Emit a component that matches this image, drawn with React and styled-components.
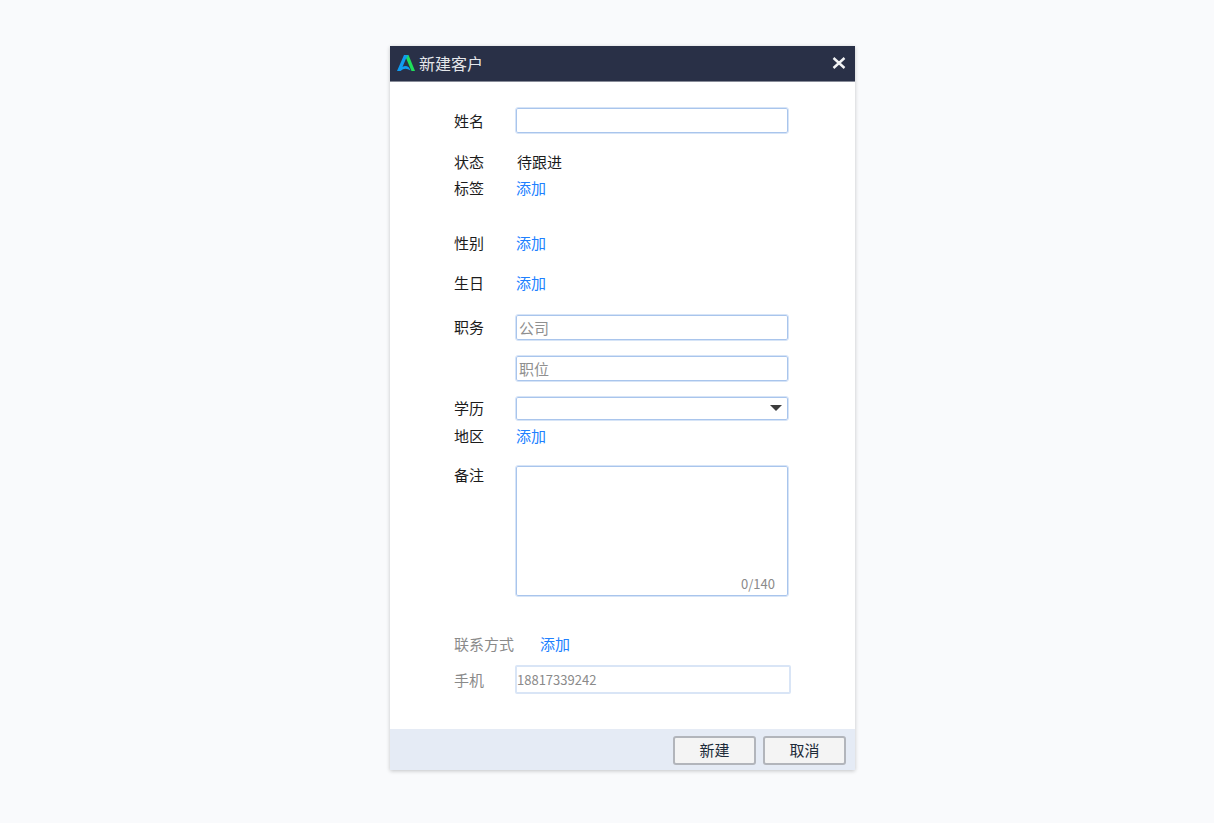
import React, { useState } from 'react';
import styled, { createGlobalStyle, css } from 'styled-components';

const GlobalStyle = createGlobalStyle`
  * {
    box-sizing: border-box;
  }

  body {
    margin: 0;
    background-color: #f9fafc;
    color: #1c1c1c;
    font-family: 'Noto Sans CJK SC', sans-serif;
    font-size: 15px;
    line-height: 26px;
  }

  button,
  input,
  select,
  textarea {
    font-family: inherit;
  }
`;

const fieldBorder = css`
  border: 1px solid #d6e4f7;
  border-radius: 3px;
  box-shadow: inset 0 0 0 1px #a9c5ec;
  outline: none;
`;

const Page = styled.main`
  display: flex;
  justify-content: center;
  align-items: flex-start;
  padding: 46px 0 48px 31px;
`;

const Dialog = styled.form`
  width: 100%;
  max-width: 465px;
  background-color: #fff;
  box-shadow: 0 1px 4px rgba(0, 0, 0, 0.22);
`;

const TitleBar = styled.header`
  display: flex;
  align-items: center;
  gap: 4px;
  height: 36px;
  padding: 0 8px 2px 7px;
  background-color: #293047;
  border-bottom: 1px solid #878b98;
`;

const Title = styled.h1`
  flex: 1;
  margin: 0;
  color: #e4e6ea;
  font-size: 16px;
  font-weight: 400;
`;

const CloseButton = styled.button`
  display: flex;
  padding: 0;
  border: none;
  background: none;
  cursor: pointer;
`;

const Body = styled.div`
  padding: 25px 64px 35px;
`;

const Row = styled.div`
  display: grid;
  grid-template-columns: ${(props) => (props.$wide ? '85px' : '61px')} 1fr;
  align-items: ${(props) => (props.$top ? 'start' : 'center')};
  min-height: 26px;
  margin-top: ${(props) => props.$gap || 0}px;
`;

const Label = styled.label`
  color: ${(props) => (props.$muted ? '#8a8a8a' : 'inherit')};
  line-height: ${(props) => (props.$tight ? '20px' : 'inherit')};
`;

const Value = styled.output`
  padding-left: 2px;
`;

const AddLink = styled.a`
  justify-self: start;
  padding-left: 1px;
  color: #2080ff;
  text-decoration: none;
`;

const Input = styled.input`
  width: 100%;
  max-width: 274px;
  height: 27px;
  padding: 0 3px;
  background-color: #fff;
  color: #1c1c1c;
  font-size: 15px;
  ${fieldBorder}

  &::placeholder {
    color: #8f8f8f;
  }
`;

const PhoneInput = styled(Input)`
  max-width: 276px;
  height: 29px;
  padding: 0;
  border: 2px solid #d9e5f6;
  border-radius: 2px;
  box-shadow: none;
  color: #8a8a8a;
  font-size: 13px;
`;

const Stack = styled.div`
  display: flex;
  flex-direction: column;
  gap: 14px;
`;

const SelectWrap = styled.div`
  display: grid;
  align-items: center;
  max-width: 274px;

  select,
  svg {
    grid-area: 1 / 1;
  }

  svg {
    justify-self: end;
    margin-right: 7px;
    pointer-events: none;
  }
`;

const Select = styled.select`
  appearance: none;
  width: 100%;
  height: 25px;
  padding: 0 24px 0 3px;
  background-color: #fff;
  font-size: 15px;
  ${fieldBorder}
`;

const NoteBox = styled.div`
  position: relative;
  max-width: 274px;
`;

const TextArea = styled.textarea`
  display: block;
  width: 100%;
  height: 132px;
  padding: 4px 4px 24px;
  font-size: 15px;
  resize: none;
  ${fieldBorder}
`;

/* sits over the bottom right corner of the textarea */
const Counter = styled.span`
  position: absolute;
  right: 14px;
  bottom: 3px;
  color: #8a8a8a;
  font-size: 13px;
  line-height: 20px;
`;

const Footer = styled.footer`
  display: flex;
  justify-content: flex-end;
  gap: 7px;
  padding: 7px 9px 5px;
  background-color: #e5ebf5;
`;

const Button = styled.button`
  width: 83px;
  height: 29px;
  padding: 0 0 2px;
  border: 2px solid #b2b5bb;
  border-radius: 3px;
  background-color: #f4f4f4;
  color: #1d2b3a;
  font-size: 15px;
  line-height: 22px;
  cursor: pointer;
`;

const Logo = () => (
  <svg width="18" height="18" viewBox="0 0 18 18" aria-hidden="true">
    <path d="M7 1h3.500L5.500 13Q8.500 11 12 13.500L13.500 16.500Q8 13 3.500 17H0z" fill="#109cf1" />
    <path d="M9 1h2.500L18 17h-3.500L9 4z" fill="#1fe05a" />
    <path d="M8 1h3L10 5z" fill="#12a6dc" />
  </svg>
);

const MAX_NOTE = 140;

function App() {
  const [note, setNote] = useState('');

  return (
    <>
      <GlobalStyle />
      <Page>
        <Dialog onSubmit={(e) => e.preventDefault()}>
          <TitleBar>
            <Logo />
            <Title>新建客户</Title>
            <CloseButton type="button" aria-label="关闭">
              <svg width="16" height="16" viewBox="0 0 16 16">
                <path d="M2.500 3l11 10M13.500 3l-11 10" stroke="#f2f3f5" strokeWidth="2.400" />
              </svg>
            </CloseButton>
          </TitleBar>

          <Body>
            <Row>
              <Label htmlFor="name">姓名</Label>
              <Input id="name" type="text" />
            </Row>
            <Row $gap={15}>
              <Label htmlFor="status">状态</Label>
              <Value id="status">待跟进</Value>
            </Row>
            <Row>
              <Label as="span">标签</Label>
              <AddLink href="#tag">添加</AddLink>
            </Row>
            <Row $gap={29}>
              <Label as="span">性别</Label>
              <AddLink href="#gender">添加</AddLink>
            </Row>
            <Row $gap={14}>
              <Label as="span">生日</Label>
              <AddLink href="#birthday">添加</AddLink>
            </Row>
            <Row $gap={18} $top>
              <Label htmlFor="company">职务</Label>
              <Stack>
                <Input id="company" type="text" placeholder="公司" />
                <Input type="text" placeholder="职位" aria-label="职位" />
              </Stack>
            </Row>
            <Row $gap={13}>
              <Label htmlFor="education">学历</Label>
              <SelectWrap>
                <Select id="education" defaultValue="">
                  <option value="" />
                </Select>
                <svg width="12" height="6" viewBox="0 0 12 6">
                  <path d="M0 0h12L6 6z" fill="#3c3c3c" />
                </svg>
              </SelectWrap>
            </Row>
            <Row $gap={2}>
              <Label as="span">地区</Label>
              <AddLink href="#region">添加</AddLink>
            </Row>
            <Row $gap={16} $top>
              <Label htmlFor="note" $tight>备注</Label>
              <NoteBox>
                <TextArea
                  id="note"
                  maxLength={MAX_NOTE}
                  value={note}
                  onChange={(e) => setNote(e.target.value)}
                />
                <Counter>{`${note.length}/${MAX_NOTE}`}</Counter>
              </NoteBox>
            </Row>
            <Row $gap={34} $wide>
              <Label as="span" $muted>联系方式</Label>
              <AddLink href="#contact">添加</AddLink>
            </Row>
            <Row $gap={8}>
              <Label htmlFor="phone" $muted>手机</Label>
              <PhoneInput id="phone" type="tel" defaultValue="18817339242" />
            </Row>
          </Body>

          <Footer>
            <Button type="submit">新建</Button>
            <Button type="button">取消</Button>
          </Footer>
        </Dialog>
      </Page>
    </>
  );
}

export default App;
